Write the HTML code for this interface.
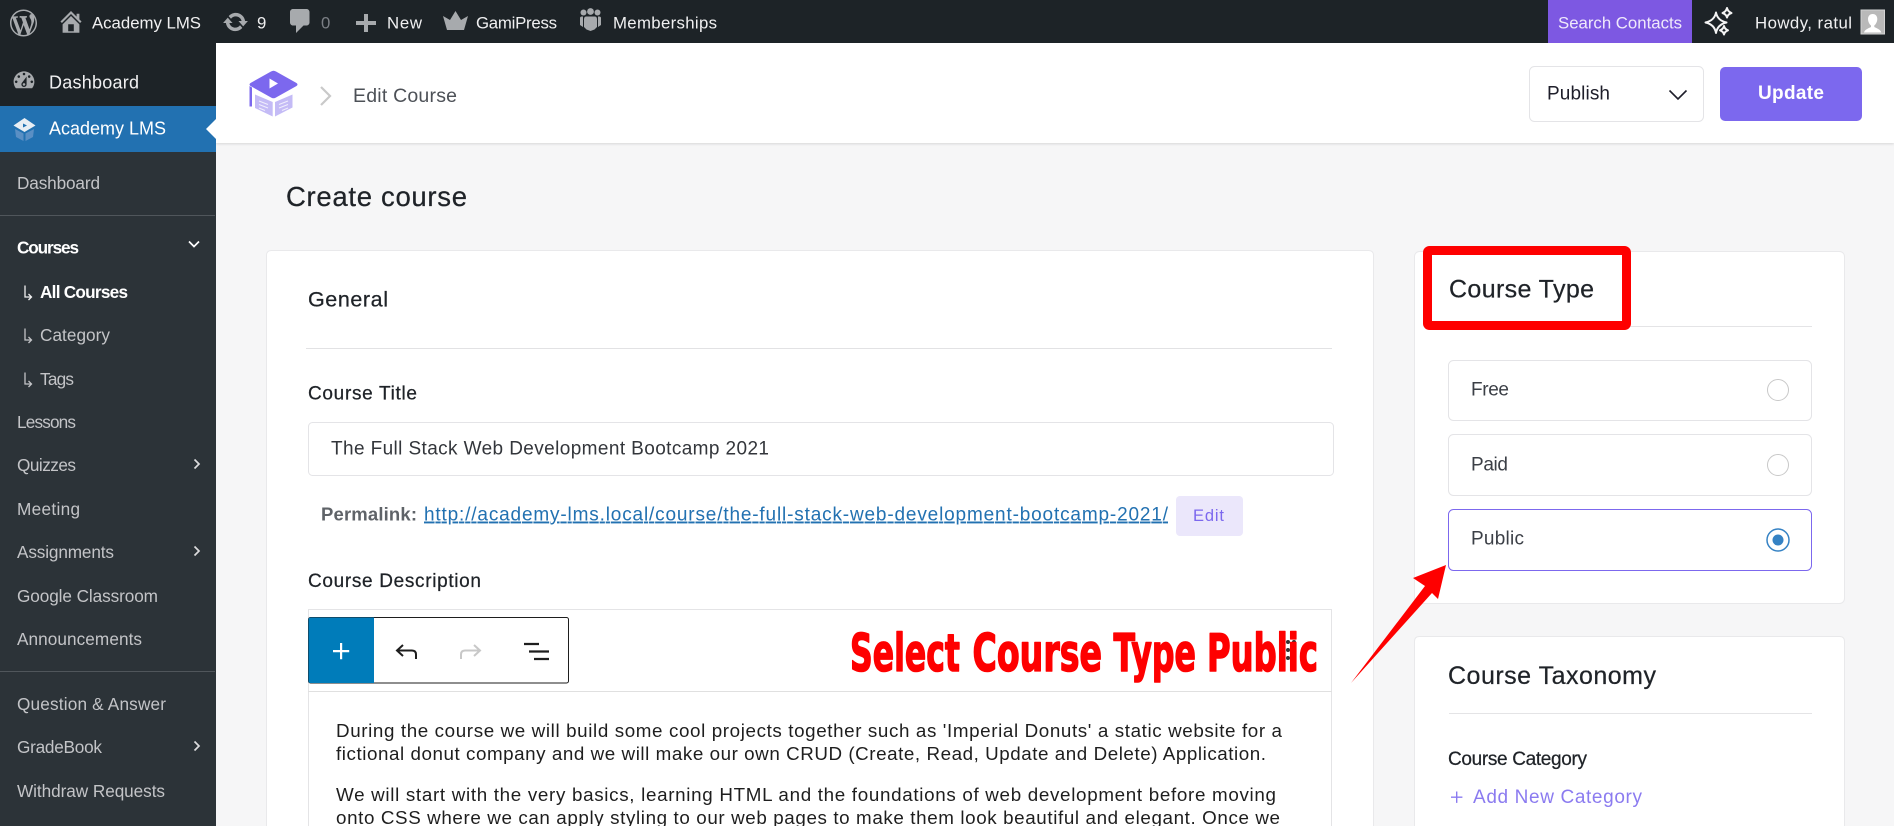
<!DOCTYPE html>
<html lang="en">
<head>
<meta charset="utf-8">
<title>Edit Course</title>
<style>
html,body{margin:0;padding:0;width:1894px;height:826px;overflow:hidden;background:#f6f6f7}
svg{display:block;position:absolute;left:0;top:0}
text{font-family:"Liberation Sans",Arial,sans-serif;white-space:pre}
.bar{font-size:16.8px;fill:#f0f0f1}
.side{font-size:17.2px;fill:#c3c4c7}
.b{font-weight:700;fill:#fff}
.h{fill:#1f2328;stroke:#1f2328;stroke-width:.25}
.body{font-size:18.8px;fill:#1e1e1e}
.ico{fill:#a7aaad}
.red{font-family:"DejaVu Sans","Liberation Sans",sans-serif;font-weight:700;font-size:52px;fill:#fe0000;stroke:#fe0000;stroke-width:1.6;stroke-linejoin:round}
</style>
</head>
<body>
<svg width="1894" height="826" viewBox="0 0 1894 826" xmlns="http://www.w3.org/2000/svg">
<defs>
<filter id="sh" x="-2%" y="-20%" width="104%" height="140%"><feDropShadow dx="0" dy="1" stdDeviation="1.2" flood-color="#000" flood-opacity=".13"/></filter>
</defs>

<!-- page -->
<rect width="1894" height="826" fill="#f6f6f7"/>

<!-- header -->
<rect x="216" y="43" width="1678" height="100" fill="#fff" filter="url(#sh)"/>

<!-- admin sidebar -->
<rect x="0" y="43" width="216" height="63" fill="#1d2327"/>
<rect x="0" y="106" width="216" height="46" fill="#2271b1"/>
<rect x="0" y="152" width="216" height="674" fill="#2c3338"/>
<polygon points="216,119 206,129 216,139" fill="#fff"/>

<!-- admin bar -->
<rect width="1894" height="43" fill="#1d2327"/>
<rect x="1548" y="0" width="144" height="43" fill="#7d58e2"/>

<g class="ico">
<g transform="translate(10,9.5) scale(1.35)"><path d="M20 10c0-5.51-4.49-10-10-10C4.48 0 0 4.49 0 10c0 5.52 4.48 10 10 10 5.51 0 10-4.48 10-10zM7.78 15.37L4.37 6.22c.55-.02 1.17-.08 1.17-.08.5-.06.44-1.13-.06-1.11 0 0-1.45.11-2.37.11-.18 0-.37 0-.58-.01C4.12 2.69 6.87 1.11 10 1.11c2.33 0 4.45.87 6.05 2.34-.68-.11-1.65.39-1.65 1.58 0 .74.45 1.36.9 2.1.35.61.55 1.36.55 2.46 0 1.49-1.4 5-1.4 5l-3.03-8.37c.54-.02.82-.17.82-.17.5-.05.44-1.25-.06-1.22 0 0-1.44.12-2.38.12-.87 0-2.33-.12-2.33-.12-.5-.03-.56 1.2-.06 1.22l.92.08 1.26 3.41zM17.41 10c.24-.64.74-1.87.43-4.25.7 1.29 1.05 2.71 1.05 4.25 0 3.29-1.73 6.24-4.4 7.78.97-2.59 1.94-5.2 2.92-7.78zM6.1 18.09C3.12 16.65 1.11 13.53 1.11 10c0-1.3.23-2.48.72-3.59C3.25 10.3 4.67 14.2 6.1 18.09zm4.03-6.63l2.58 6.98c-.86.29-1.76.45-2.71.45-.79 0-1.57-.11-2.29-.33.81-2.38 1.62-4.74 2.42-7.1z"/></g>
<g transform="translate(57,7.500) scale(1.4)"><path d="M16 8.5l1.53 1.53-1.06 1.06L10 4.62l-6.47 6.47-1.06-1.06L10 2.5l4 4v-2h2v4zm-6-2.46l6 5.99V18H4v-5.97zM12 17v-5H8v5h4z"/></g>
<g transform="translate(222,8.500) scale(1.35)"><path d="M10.2 3.28c3.53 0 6.43 2.61 6.92 6h2.08l-3.5 4-3.5-4h2.32c-.45-1.97-2.21-3.45-4.32-3.45-1.45 0-2.73.71-3.54 1.78L4.95 5.66C6.23 4.2 8.11 3.28 10.2 3.28zm-.4 13.44c-3.52 0-6.43-2.61-6.92-6H.8l3.5-4c1.17 1.33 2.33 2.67 3.5 4H5.48c.45 1.97 2.21 3.45 4.32 3.45 1.45 0 2.73-.71 3.54-1.78l1.71 1.95c-1.28 1.46-3.15 2.38-5.25 2.38z"/></g>
<g transform="translate(285.500,6) scale(1.5)"><path d="M5 2h9c1.1 0 2 .9 2 2v7c0 1.1-.9 2-2 2h-2l-5 5v-5H5c-1.1 0-2-.9-2-2V4c0-1.1.9-2 2-2z"/></g>
<path d="M364 14h4v7h8v4h-8v7h-4v-7h-8v-4h8z"/>
<path d="M443 16l7 4 5.500-9 5.500 9 7-4-4 14h-17z"/>
<!-- members -->
<circle cx="590.500" cy="11.500" r="3.400"/><circle cx="583.500" cy="12.500" r="3"/><circle cx="597.500" cy="12.500" r="3"/>
<path d="M586 16.500h9q2 0 2 3v7.500l-2.500 2.500-4 1.500-4-1.500-2.500-2.500v-7.500q0-3 2-3z"/>
<path d="M580 18q0-1.500 2-1.500h1v10.500l-3-2zM601 18q0-1.500-2-1.500h-1v10.500l3-2z"/>
</g>
<text class="bar" x="92" y="28.500" textLength="109">Academy LMS</text>
<text class="bar" x="257" y="28.500" textLength="9">9</text>
<text class="bar" x="321" y="28.500" textLength="10" style="fill:#7b7f85">0</text>
<text class="bar" x="387" y="28.500" textLength="35">New</text>
<text class="bar" x="476" y="28.500" textLength="81">GamiPress</text>
<text class="bar" x="613" y="28.500" textLength="104">Memberships</text>
<text class="bar" x="1558" y="28.500" textLength="124" style="fill:#efe9fb">Search Contacts</text>
<text class="bar" x="1755" y="28.500" textLength="97">Howdy, ratul</text>
<g fill="none" stroke="#f4f4f4" stroke-width="2" stroke-linejoin="round">
<path d="M1716 12.500q1.500 8 10.500 10-9 2-10.500 10.500-1.500-8.500-10.500-10.500 9-2 10.500-10z"/>
<path d="M1727 8q.7 3.500 4.500 5-3.800 1.300-4.500 4.500-.7-3.200-4.500-4.500 3.800-1.500 4.500-5z"/>
<path d="M1724 26q.7 3 4 4.300-3.300 1.200-4 4.200-.7-3-4-4.200 3.300-1.300 4-4.300z"/>
</g>
<rect x="1861" y="10" width="23.500" height="24" fill="#b9b9b9" stroke="#d4d4d4" stroke-width="1"/>
<path d="M1872.700 14c3 0 4.600 2.300 4.600 5s-1.600 5.500-3 6.500v1.500c1.500 1 6 2 7 5.500h-17.300c1-3.500 5.500-4.500 7-5.500v-1.500c-1.400-1-3-3.800-3-6.500s1.700-5 4.700-5z" fill="#fff"/>

<!-- sidebar top items -->
<g transform="translate(11,67.500) scale(1.3)" class="ico"><path d="M3.76 16h12.48c1.100-1.370 1.760-3.110 1.760-5 0-4.420-3.580-8-8-8s-8 3.580-8 8c0 1.890.66 3.630 1.760 5zM10 4c.55 0 1 .45 1 1s-.45 1-1 1-1-.45-1-1 .45-1 1-1zM6 6c.55 0 1 .45 1 1s-.45 1-1 1-1-.45-1-1 .45-1 1-1zm8 0c.55 0 1 .45 1 1s-.45 1-1 1-1-.45-1-1 .45-1 1-1zm-5.370 5.550L12 7v6c0 1.100-.9 2-2 2s-2-.9-2-2c0-.57.24-1.080.63-1.450zM4 10c.55 0 1 .45 1 1s-.45 1-1 1-1-.45-1-1 .45-1 1-1zm12 0c.55 0 1 .45 1 1s-.45 1-1 1-1-.45-1-1 .45-1 1-1zm-5 3c0-.55-.45-1-1-1s-1 .45-1 1 .45 1 1 1 1-.45 1-1z"/></g>
<path d="M24.500 118l11 7.500-11 6.500-11-6.500z" fill="#e8eef4"/>
<path d="M23 123.500l4 2-4 2z" fill="#2271b1"/>
<path d="M15 129l8.500 4.500v7.500l-7.500-4zM34 129l-8.500 4.500v7.500l7.500-4z" fill="#5a8fc4"/>
<text x="49" y="88.500" font-size="18" textLength="90" fill="#f0f0f1">Dashboard</text>
<text x="49" y="134.500" font-size="18" textLength="117" fill="#fff">Academy LMS</text>

<!-- sidebar submenu -->
<g class="side">
<text x="17" y="189" textLength="83">Dashboard</text>
<text class="b" x="17" y="253.500" textLength="62">Courses</text>
<text class="b" x="40" y="298" textLength="88">All Courses</text>
<text x="40" y="341" textLength="70">Category</text>
<text x="40" y="385" textLength="34">Tags</text>
<text x="17" y="428" textLength="59">Lessons</text>
<text x="17" y="471" textLength="59">Quizzes</text>
<text x="17" y="515" textLength="63">Meeting</text>
<text x="17" y="558" textLength="97">Assignments</text>
<text x="17" y="602" textLength="141">Google Classroom</text>
<text x="17" y="645" textLength="125">Announcements</text>
<text x="17" y="710" textLength="149">Question &amp; Answer</text>
<text x="17" y="753" textLength="85">GradeBook</text>
<text x="17" y="797" textLength="148">Withdraw Requests</text>
</g>
<rect x="0" y="215" width="215" height="1" fill="#50565b"/>
<rect x="0" y="671" width="215" height="1" fill="#50565b"/>
<g fill="none" stroke="#c3c4c7" stroke-width="1.300">
<path d="M25 285.500v11.500h6m-2.500-3l3 3-3 3" stroke="#f0f0f1"/>
<path d="M25 328.500v11.500h6m-2.500-3l3 3-3 3"/>
<path d="M25 372.500v11.500h6m-2.500-3l3 3-3 3"/>
</g>
<g fill="none" stroke="#dcdcde" stroke-width="1.700">
<path d="M189 241.500l5 5 5-5" stroke="#fff"/>
<path d="M194.500 459.500l4.500 4.500-4.500 4.500"/>
<path d="M194.500 546.500l4.500 4.500-4.500 4.500"/>
<path d="M194.500 741.500l4.500 4.500-4.500 4.500"/>
</g>

<!-- logo -->
<path d="M255 94.500l17.700 7.500v14.500l-17.700-8.500z" fill="#c4bbf6"/>
<path d="M275 102l17.500-7.500v13l-17.500 9z" fill="#c4bbf6"/>
<g stroke="#fff" stroke-width="1" opacity=".75"><path d="M259 101l9 3.500M259 104.500l9 3.500M259 108l6 2.500M288 101l-9 3.500M288 104.500l-9 3.500M288 108l-6 2.500"/></g>
<path d="M271 71.500q2.500-1.500 5 0l20.500 11.500q2 1.500 0 3l-20.500 11.500q-2.500 1.500-5 0l-20.500-11.500q-2-1.500 0-3z" fill="#7c68ee"/>
<path d="M269.500 78.500l8.500 5-8.500 5z" fill="#fff"/>
<path d="M249.500 86l2.500 1.500v19h-2.500z" fill="#7c68ee"/>
<path d="M321 87l9 9-9 9" fill="none" stroke="#c9c9c9" stroke-width="2.200"/>
<text x="353" y="102" font-size="19.500" textLength="104" fill="#4d5157">Edit Course</text>

<!-- header right -->
<rect x="1529.500" y="66.500" width="174" height="55" rx="5" fill="#fff" stroke="#e4e4e7"/>
<text x="1547" y="99.500" font-size="19" textLength="63" fill="#1e1e2a">Publish</text>
<path d="M1669.500 90.500l8.500 8.500 8.500-8.500" fill="none" stroke="#1e1e2a" stroke-width="1.600"/>
<rect x="1720" y="67" width="142" height="54" rx="5" fill="#7c68ee"/>
<text x="1758" y="99" font-size="19" font-weight="700" textLength="66" fill="#fff">Update</text>

<!-- title -->
<text class="h" x="286" y="206" font-size="27.500" textLength="181">Create course</text>

<!-- main card -->
<path d="M266.500 826v-570.500q0-5 5-5h1097q5 0 5 5V826" fill="#fff" stroke="#e9e9eb"/>
<text class="h" x="308" y="306.500" font-size="21.500" textLength="80">General</text>
<rect x="306" y="348" width="1026" height="1" fill="#e2e2e4"/>
<text class="h" x="308" y="399.500" font-size="19" textLength="109">Course Title</text>
<rect x="308.500" y="422.500" width="1025" height="53" rx="4" fill="#fff" stroke="#e4e4e7"/>
<text x="331" y="454.500" font-size="19" textLength="438" fill="#33363b">The Full Stack Web Development Bootcamp 2021</text>
<text x="321" y="520.500" font-size="18.500" font-weight="700" textLength="96" fill="#5f6368">Permalink:</text>
<text x="424" y="520.500" font-size="19" textLength="744" fill="#2271b1" text-decoration="underline">http://academy-lms.local/course/the-full-stack-web-development-bootcamp-2021/</text>
<rect x="1176" y="496" width="67" height="40" rx="4" fill="#ebe7fb"/>
<text x="1193" y="521" font-size="16.500" textLength="31" fill="#7c68ee">Edit</text>
<text class="h" x="308" y="587" font-size="19" textLength="173">Course Description</text>

<!-- editor -->
<rect x="308" y="609" width="1" height="217" fill="#e4e4e6"/>
<rect x="1331" y="609" width="1" height="217" fill="#e4e4e6"/>
<rect x="308" y="609" width="1024" height="1" fill="#e4e4e6"/>
<rect x="308" y="691" width="1024" height="1" fill="#e0e0e0"/>
<rect x="308.500" y="617.500" width="260" height="65.500" rx="2" fill="#fff" stroke="#1e1e1e"/>
<path d="M310.500 617.500h63.500v65.500h-63.500q-2 0-2-2v-61.500q0-2 2-2z" fill="#007cba"/>
<path d="M340 643h2.200v7h7v2.200h-7v7H340v-7h-7V650h7z" fill="#fff"/>
<g fill="none" stroke-width="2">
<path d="M416 659v-4.500q0-4-4-4h-15m6-5.500l-6 5.500 6 5.500" stroke="#1e1e1e"/>
<path d="M461 659v-4.500q0-4 4-4h15m-6-5.500l6 5.500-6 5.500" stroke="#c8c8c8"/>
<path d="M524 644h15M529 651.500h20M534 659h15" stroke="#1e1e1e" stroke-width="2.200"/>
</g>

<g class="body">
<text x="336" y="737" textLength="946">During the course we will build some cool projects together such as 'Imperial Donuts' a static website for a</text>
<text x="336" y="760" textLength="930">fictional donut company and we will make our own CRUD (Create, Read, Update and Delete) Application.</text>
<text x="336" y="801" textLength="940">We will start with the very basics, learning HTML and the foundations of web development before moving</text>
<text x="336" y="824" textLength="944">onto CSS where we can apply styling to our web pages to make them look beautiful and elegant. Once we</text>
</g>

<!-- block drag handle under annotation -->
<g fill="#333">
<circle cx="1288" cy="642" r="2"/><circle cx="1294" cy="642" r="2"/>
<circle cx="1288" cy="650" r="2"/><circle cx="1294" cy="650" r="2"/>
<circle cx="1288" cy="658" r="2"/><circle cx="1294" cy="658" r="2"/>
</g>
<text class="red" x="850" y="671" textLength="110" lengthAdjust="spacingAndGlyphs">Select</text>
<text class="red" x="972.500" y="671" textLength="129.500" lengthAdjust="spacingAndGlyphs">Course</text>
<text class="red" x="1113.500" y="671" textLength="82.500" lengthAdjust="spacingAndGlyphs">Type</text>
<text class="red" x="1207" y="671" textLength="111" lengthAdjust="spacingAndGlyphs">Public</text>

<!-- side card: course type -->
<rect x="1414.500" y="251.500" width="430" height="352" rx="5" fill="#fff" stroke="#e9e9eb"/>
<rect x="1449" y="326" width="363" height="1" fill="#e4e4e6"/>
<rect x="1448.500" y="360.500" width="363" height="60" rx="5" fill="#fff" stroke="#e4e4e7"/>
<rect x="1448.500" y="434.500" width="363" height="61" rx="5" fill="#fff" stroke="#e4e4e7"/>
<rect x="1448.500" y="509.500" width="363" height="61" rx="5" fill="#fff" stroke="#7c68ee"/>
<text x="1471" y="395.500" font-size="19" textLength="38" fill="#3b3f46">Free</text>
<text x="1471" y="470.500" font-size="19" textLength="37" fill="#3b3f46">Paid</text>
<text x="1471" y="544.500" font-size="19" textLength="53" fill="#3b3f46">Public</text>
<circle cx="1778" cy="390" r="10.500" fill="#fff" stroke="#c8c8c8"/>
<circle cx="1778" cy="465" r="10.500" fill="#fff" stroke="#c8c8c8"/>
<circle cx="1778" cy="540" r="11" fill="#fff" stroke="#3582c4" stroke-width="1.500"/>
<circle cx="1778" cy="540" r="5.500" fill="#3582c4"/>

<!-- annotation rectangle -->
<rect x="1427.500" y="250.500" width="199" height="75" rx="2" fill="#fff" stroke="#fe0000" stroke-width="9"/>
<text class="h" x="1449" y="297.500" font-size="25" textLength="145">Course Type</text>

<!-- side card: taxonomy -->
<path d="M1414.500 826V641.500q0-5 5-5h420q5 0 5 5V826" fill="#fff" stroke="#e9e9eb"/>
<text class="h" x="1448" y="684" font-size="25" textLength="208">Course Taxonomy</text>
<rect x="1449" y="713" width="363" height="1" fill="#e4e4e6"/>
<text class="h" x="1448" y="765" font-size="19" textLength="139">Course Category</text>
<path d="M1456 791.500h1.400v5h5v1.400h-5v5H1456v-5h-5v-1.400h5z" fill="#8b7bf0"/>
<text x="1473" y="803" font-size="19" textLength="169" fill="#8b7bf0">Add New Category</text>

<!-- arrow -->
<polygon points="1446,565 1413,578 1425,586 1351,683 1432,593 1438,599" fill="#fe0000"/>
</svg>
</body>
</html>
